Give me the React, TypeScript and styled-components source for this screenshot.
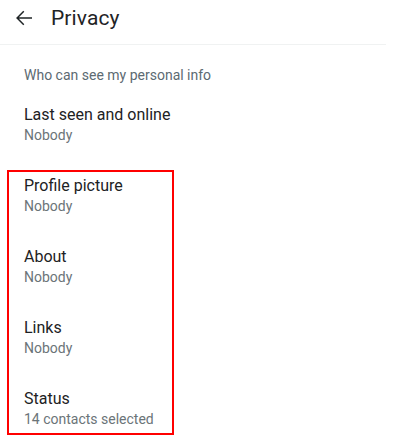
import styled, { createGlobalStyle } from "styled-components";

const GlobalStyle = createGlobalStyle`
    html, body {
        margin: 0;
        padding: 0;
        background: #fff;
    }
    body {
        font-family: Roboto, "Noto Sans", Arial, sans-serif;
        -webkit-font-smoothing: antialiased;
    }
`;

const Page = styled.div`
    width: 400px;
    height: 440px;
    overflow: hidden;
    background: #fff;
`;

const Header = styled.header`
    height: 36px;
    margin-right: 14px;
    padding: 0 16px 8px 12px;
    display: flex;
    align-items: center;
    gap: 15px;
    border-bottom: 1px solid #f0f2f2;
`;

const BackButton = styled.button`
    width: 24px;
    height: 24px;
    padding: 0;
    border: none;
    background: none;
    display: flex;
    align-items: center;
    justify-content: center;
    color: #1f2426;
`;

const Title = styled.h1`
    margin: 0;
    font-size: 21px;
    font-weight: 400;
    color: #1f2426;
    letter-spacing: 0.1px;
`;

const SectionHeading = styled.div`
    padding: 20px 24px 0;
    height: 20px;
    line-height: 20px;
    font-size: 14px;
    color: #5c6a72;
`;

const Row = styled.div<{ $inset?: boolean }>`
    display: flex;
    flex-direction: column;
    padding: ${(p) => (p.$inset ? "0 15px" : "20px 24px 0")};
`;

const RowTitle = styled.div`
    font-size: 16px;
    line-height: 20px;
    color: #1d2224;
`;

const RowValue = styled.div`
    font-size: 14px;
    line-height: 20px;
    color: #6b7478;
`;

const Highlight = styled.div`
    margin: 25px 0 0 7px;
    width: 163px;
    border: 2px solid #ff0000;
    padding: 4px 0 4px;
    display: flex;
    flex-direction: column;
    gap: 31px;
`;

const items = [
    { title: "Profile picture", value: "Nobody" },
    { title: "About", value: "Nobody" },
    { title: "Links", value: "Nobody" },
    { title: "Status", value: "14 contacts selected" },
];

export default function App() {
    return (
        <Page>
            <GlobalStyle />
            <Header>
                <BackButton aria-label="Back">
                    <svg width="24" height="24" viewBox="0 0 24 24" fill="currentColor">
                        <path d="M20 11.25H6.9l5.4-5.4-1.05-1.05L4.05 12l7.2 7.2 1.05-1.05-5.4-5.4H20z" />
                    </svg>
                </BackButton>
                <Title>Privacy</Title>
            </Header>

            <SectionHeading>Who can see my personal info</SectionHeading>

            <Row>
                <RowTitle>Last seen and online</RowTitle>
                <RowValue>Nobody</RowValue>
            </Row>

            <Highlight>
                {items.map((item) => (
                    <Row $inset key={item.title}>
                        <RowTitle>{item.title}</RowTitle>
                        <RowValue>{item.value}</RowValue>
                    </Row>
                ))}
            </Highlight>
        </Page>
    );
}
